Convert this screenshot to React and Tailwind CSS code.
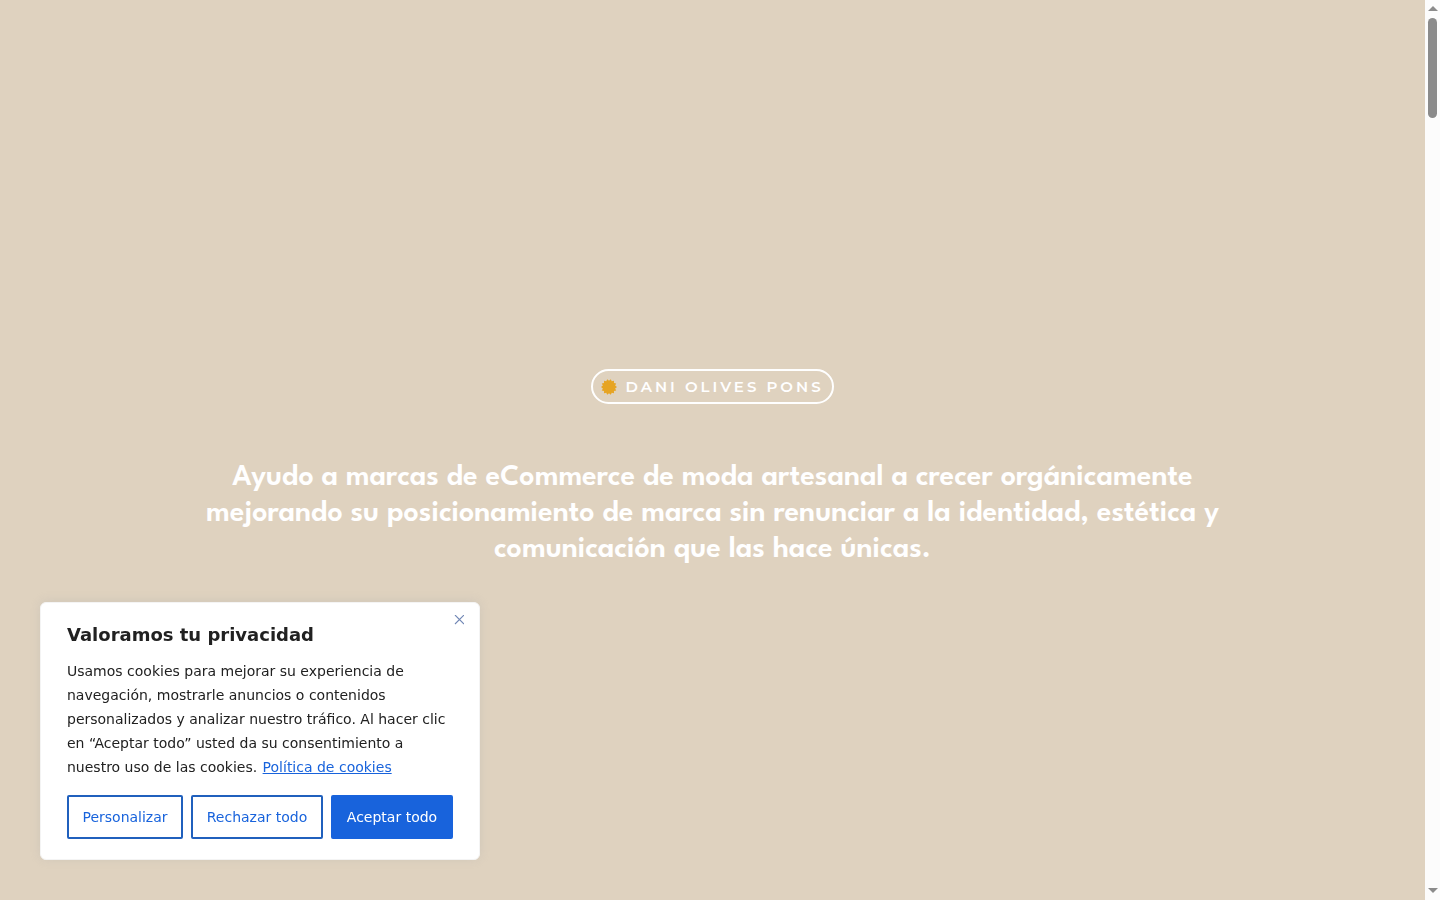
import React from "react";

const POINTS = Array.from({ length: 28 }, (_, i) => {
  const r = i % 2 ? 6.3 : 8;
  const a = (i * Math.PI) / 14;
  return `${(8 + r * Math.cos(a)).toFixed(2)},${(8 + r * Math.sin(a)).toFixed(2)}`;
}).join(" ");

function Badge() {
  return (
    <p className="flex h-[35px] items-center gap-2 rounded-full border-2 border-white px-2 font-['Montserrat','Open_Sans',sans-serif] text-[15px] font-semibold tracking-[3px] text-white">
      <svg viewBox="0 0 16 16" className="size-4 shrink-0" aria-hidden="true">
        <polygon points={POINTS} fill="#e6a423" />
      </svg>
      <span className="pt-px">DANI OLIVES PONS</span>
    </p>
  );
}

function CookieNotice() {
  return (
    <section
      aria-labelledby="cookie-title"
      className="fixed bottom-10 left-10 w-[440px] rounded-md border border-[#f4f4f4] bg-white px-[26px] pt-5 pb-5 font-['DejaVu_Sans',sans-serif] text-sm text-[#212121] shadow-[0_-1px_10px_0_#acabab4d]"
    >
      <button type="button" aria-label="Cerrar" className="absolute top-3 right-[15px] flex cursor-pointer">
        <svg viewBox="0 0 10 10" className="size-[10px]" fill="none" stroke="#7187b5" strokeWidth="1.1">
          <path d="M1 0 10 9M10 0 1 9" />
        </svg>
      </button>
      <h2 id="cookie-title" className="text-lg leading-6 font-bold">
        Valoramos tu privacidad
      </h2>
      <p className="mt-3 leading-6">
        Usamos cookies para mejorar su experiencia de navegación, mostrarle anuncios o contenidos
        personalizados y analizar nuestro tráfico. Al hacer clic en “Aceptar todo” usted da su
        consentimiento a nuestro uso de las cookies.{" "}
        <a href="#cookies" className="ml-px text-[#1863dc] underline">
          Política de cookies
        </a>
      </p>
      <div className="mt-4 flex gap-2 text-[#1863dc]">
        <button type="button" className="h-11 grow rounded-xs border-2 border-[#2060bd] whitespace-nowrap">
          Personalizar
        </button>
        <button type="button" className="h-11 w-[132px] rounded-xs border-2 border-[#2060bd] whitespace-nowrap">
          Rechazar todo
        </button>
        <button type="button" className="h-11 w-[122px] rounded-xs border-2 border-[#1863dc] bg-[#1863dc] whitespace-nowrap text-white">
          Aceptar todo
        </button>
      </div>
    </section>
  );
}

function ScrollTrack() {
  return (
    <div aria-hidden="true" className="flex w-[15px] shrink-0 flex-col items-center bg-[#fcfcfc] pt-[6px] pb-[7px]">
      <svg viewBox="0 0 10 5" className="h-[5px] w-[10px]" fill="#8b8b8b">
        <path d="M5 0 10 5H0Z" />
      </svg>
      <div className="mt-[7px] h-[100px] w-[9px] rounded-full bg-[#8b8b8b]" />
      <svg viewBox="0 0 10 5" className="mt-auto h-[5px] w-[10px]" fill="#8b8b8b">
        <path d="M0 0H10L5 5Z" />
      </svg>
    </div>
  );
}

export default function App() {
  return (
    <div className="flex min-h-screen bg-[#dfd2bf]">
      <main className="flex grow flex-col items-center justify-center gap-14 px-6 pt-[37px]">
        <Badge />
        <h1 className="max-w-[1040px] text-center font-['League_Spartan','Lato',sans-serif] text-[30px] leading-9 font-semibold text-white">
          Ayudo a marcas de eCommerce de moda artesanal a crecer orgánicamente mejorando su
          posicionamiento de marca sin renunciar a la identidad, estética y comunicación que las hace
          únicas.
        </h1>
      </main>
      <CookieNotice />
      <ScrollTrack />
    </div>
  );
}
